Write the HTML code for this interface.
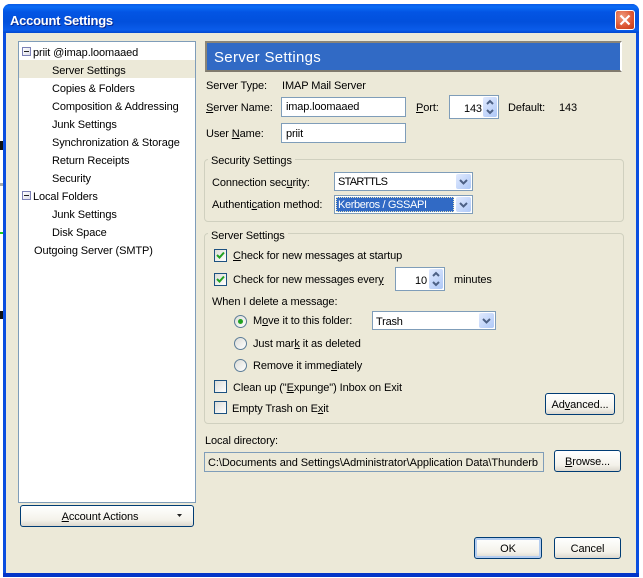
<!DOCTYPE html>
<html><head><meta charset="utf-8">
<style>
html,body{margin:0;padding:0;background:#fff;}
body{width:643px;height:578px;overflow:hidden;position:relative;font-family:"Liberation Sans",sans-serif;font-size:11px;color:#000;}
div,span.a{box-sizing:border-box;}
.abs,.t,.in,.btn,.cb,.rb,.sp,.dd,.grp,.pm{position:absolute;}
.t{white-space:nowrap;line-height:14px;height:14px;letter-spacing:-.1px;margin-top:1px;}
u{text-decoration:underline;}
.in{background:#fff;border:1px solid #7f9db9;line-height:20px;padding-left:5px;white-space:nowrap;overflow:hidden;letter-spacing:-.15px;}
.btn{background:linear-gradient(#fff,#f4f2ea 70%,#dcd8ce);border:1px solid #003c74;border-radius:3px;text-align:center;line-height:19px;letter-spacing:-.1px;padding-top:1px;}
.grp{border:1px solid #d0d0bf;border-radius:4px;}
.lg{position:absolute;background:#ece9d8;padding:0 3px;line-height:14px;left:4px;top:-6px;white-space:nowrap;letter-spacing:-.1px;}
.cb{width:13px;height:13px;border:1px solid #1c5180;background:linear-gradient(135deg,#dcdcd7,#fff);}
.rb{width:13px;height:13px;border:1px solid #5c7d98;border-radius:50%;background:linear-gradient(135deg,#dcdcd7,#fff);}
.arrowbox{position:absolute;background:linear-gradient(135deg,#e1eafe,#aec8f7);border-radius:2px;}
svg{position:absolute;display:block;}
.pm{width:9px;height:9px;border:1px solid #7b80b5;background:linear-gradient(135deg,#fff,#dcdce8);}
.pm:after{content:"";position:absolute;left:1px;top:3px;width:5px;height:1px;background:#222;}
</style></head><body>
<!-- stray desktop bits -->
<div class="abs" style="left:0;top:141px;width:3px;height:9px;background:#111"></div>
<div class="abs" style="left:0;top:183px;width:3px;height:3px;background:#aaa"></div>
<div class="abs" style="left:0;top:232px;width:3px;height:2px;background:#2c2"></div>
<div class="abs" style="left:0;top:311px;width:3px;height:8px;background:#111"></div>

<!-- window -->
<div class="abs" style="left:3px;top:4px;width:636px;height:573px;border-radius:7px 7px 0 0;background:#0a4ee0;overflow:hidden;">
 <div class="abs" style="left:0;top:0;width:636px;height:29px;background:linear-gradient(#0a5be8 0,#0b6cf5 3px,#0355e4 8px,#0250dc 18px,#0a5cea 26px,#0348d0 29px);"></div>
 <div class="abs" style="left:3px;top:29px;width:630px;height:540px;background:#ece9d8;"></div>
 <div class="abs" style="left:0;top:569px;width:636px;height:4px;background:#0335c8"></div>
</div>
<div class="t" style="left:10px;top:13px;color:#fff;font-weight:bold;font-size:13px;letter-spacing:-.25px;text-shadow:1px 1px 0 #0a2a90;">Account Settings</div>
<!-- close -->
<div class="abs" style="left:615px;top:10px;width:20px;height:20px;border:1px solid #fff;border-radius:3px;background:radial-gradient(circle at 35% 30%,#ef9a7c,#dc5430 60%,#c13a16);"></div>
<svg style="left:615px;top:10px" width="20" height="20"><path d="M5.5 5.5L14.5 14.5M14.5 5.5L5.5 14.5" stroke="#fff" stroke-width="2.2" fill="none"/></svg>

<!-- left tree -->
<div class="abs" style="left:18px;top:41px;width:178px;height:462px;background:#fff;border:1px solid #7f9db9;"></div>
<div class="abs" style="left:19px;top:60px;width:176px;height:18px;background:#ece9d8;"></div>
<div class="pm" style="left:22px;top:47px"></div>
<div class="t" style="left:33px;top:45px">priit @imap.loomaaed</div>
<div class="t" style="left:52px;top:63px">Server Settings</div>
<div class="t" style="left:52px;top:81px">Copies &amp; Folders</div>
<div class="t" style="left:52px;top:99px">Composition &amp; Addressing</div>
<div class="t" style="left:52px;top:117px">Junk Settings</div>
<div class="t" style="left:52px;top:135px">Synchronization &amp; Storage</div>
<div class="t" style="left:52px;top:153px">Return Receipts</div>
<div class="t" style="left:52px;top:171px">Security</div>
<div class="pm" style="left:22px;top:191px"></div>
<div class="t" style="left:33px;top:189px">Local Folders</div>
<div class="t" style="left:52px;top:207px">Junk Settings</div>
<div class="t" style="left:52px;top:225px">Disk Space</div>
<div class="t" style="left:34px;top:243px">Outgoing Server (SMTP)</div>

<div class="btn" style="left:20px;top:505px;width:174px;height:22px;line-height:20px;padding-right:14px"><u>A</u>ccount Actions</div>
<svg style="left:177px;top:514px" width="7" height="4"><path d="M0 0H5L2.500 3Z" fill="#222"/></svg>

<!-- header -->
<div class="abs" style="left:205px;top:41px;width:417px;height:31px;background:#316ac5;border:2px solid;border-color:#8a8578 #fff #807a6e #8a8578;"></div>
<div class="t" style="left:214px;top:49px;color:#fff;font-size:15px;line-height:16px;height:16px;letter-spacing:.3px">Server Settings</div>

<div class="t" style="left:206px;top:78px">Server Type:</div>
<div class="t" style="left:282px;top:78px">IMAP Mail Server</div>
<div class="t" style="left:206px;top:100px"><u>S</u>erver Name:</div>
<div class="in" style="left:281px;top:97px;width:125px;height:20px;line-height:18px;padding-left:4px">imap.loomaaed</div>
<div class="t" style="left:416px;top:100px"><u>P</u>ort:</div>
<div class="in" style="left:449px;top:95px;width:50px;height:24px;line-height:24px;padding-left:14px;padding-top:1px">143</div>
<div class="arrowbox" style="left:483px;top:97px;width:14px;height:20px"></div>
<svg style="left:483px;top:97px" width="14" height="20"><path d="M4 7L7 4L10 7M4 13L7 16L10 13" stroke="#4d6185" stroke-width="2" fill="none"/></svg>
<div class="t" style="left:508px;top:100px">Default:</div>
<div class="t" style="left:559px;top:100px">143</div>
<div class="t" style="left:206px;top:126px">User <u>N</u>ame:</div>
<div class="in" style="left:281px;top:123px;width:125px;height:20px;line-height:18px;padding-left:4px;padding-top:1px">priit</div>

<!-- security -->
<div class="grp" style="left:204px;top:159px;width:420px;height:63px"><div class="lg" style="left:3px">Security Settings</div></div>
<div class="t" style="left:212px;top:175px">Connection sec<u>u</u>rity:</div>
<div class="in" style="left:334px;top:172px;width:139px;height:19px;line-height:17px;padding-left:3px;padding-top:1px;letter-spacing:-.75px">STARTTLS</div>
<div class="arrowbox" style="left:456px;top:174px;width:15px;height:15px"></div>
<svg style="left:456px;top:174px" width="15" height="15"><path d="M4 6L7.500 9.500L11 6" stroke="#4d6185" stroke-width="2" fill="none"/></svg>
<div class="t" style="left:212px;top:197px">Authenti<u>c</u>ation method:</div>
<div class="in" style="left:334px;top:195px;width:139px;height:19px;padding:0"></div>
<div class="abs" style="left:336px;top:197px;width:118px;height:15px;background:#316ac5;outline:1px dotted #e8e4b8;outline-offset:-1px;color:#fff;line-height:15px;padding-left:2px;padding-top:1px;letter-spacing:-.36px;white-space:nowrap;overflow:hidden">Kerberos / GSSAPI</div>
<div class="arrowbox" style="left:456px;top:197px;width:15px;height:15px"></div>
<svg style="left:456px;top:197px" width="15" height="15"><path d="M4 6L7.500 9.500L11 6" stroke="#4d6185" stroke-width="2" fill="none"/></svg>

<!-- server settings group -->
<div class="grp" style="left:204px;top:233px;width:420px;height:191px"><div class="lg" style="left:3px;top:-5px">Server Settings</div></div>
<div class="cb" style="left:214px;top:249px"></div>
<svg style="left:214px;top:249px" width="13" height="13"><path d="M3 6L5.500 8.500L10 3.500" stroke="#21a121" stroke-width="2" fill="none"/></svg>
<div class="t" style="left:233px;top:248px"><u>C</u>heck for new messages at startup</div>
<div class="cb" style="left:214px;top:273px"></div>
<svg style="left:214px;top:273px" width="13" height="13"><path d="M3 6L5.500 8.500L10 3.500" stroke="#21a121" stroke-width="2" fill="none"/></svg>
<div class="t" style="left:233px;top:272px">Check for new messages ever<u>y</u></div>
<div class="in" style="left:395px;top:267px;width:50px;height:24px;line-height:24px;padding-left:19px;padding-top:1px">10</div>
<div class="arrowbox" style="left:429px;top:269px;width:14px;height:20px"></div>
<svg style="left:429px;top:269px" width="14" height="20"><path d="M4 7L7 4L10 7M4 13L7 16L10 13" stroke="#4d6185" stroke-width="2" fill="none"/></svg>
<div class="t" style="left:454px;top:272px">minutes</div>
<div class="t" style="left:212px;top:294px">When I delete a message:</div>

<div class="rb" style="left:234px;top:315px"></div>
<div class="abs" style="left:238px;top:319px;width:5px;height:5px;border-radius:50%;background:#21a121"></div>
<div class="t" style="left:253px;top:313px">M<u>o</u>ve it to this folder:</div>
<div class="in" style="left:372px;top:311px;width:124px;height:19px;line-height:19px;padding-left:3px;padding-top:1px;letter-spacing:-.2px">Trash</div>
<div class="arrowbox" style="left:479px;top:313px;width:15px;height:15px"></div>
<svg style="left:479px;top:313px" width="15" height="15"><path d="M4 6L7.500 9.500L11 6" stroke="#4d6185" stroke-width="2" fill="none"/></svg>
<div class="rb" style="left:234px;top:337px"></div>
<div class="t" style="left:253px;top:336px">Just mar<u>k</u> it as deleted</div>
<div class="rb" style="left:234px;top:359px"></div>
<div class="t" style="left:253px;top:358px">Remove it imme<u>d</u>iately</div>

<div class="cb" style="left:214px;top:380px"></div>
<div class="t" style="left:233px;top:380px">Clean up ("<u>E</u>xpunge") Inbox on Exit</div>
<div class="cb" style="left:214px;top:401px"></div>
<div class="t" style="left:232px;top:401px">Empty Trash on E<u>x</u>it</div>
<div class="btn" style="left:545px;top:393px;width:70px;height:22px;line-height:20px">Ad<u>v</u>anced...</div>

<div class="t" style="left:205px;top:433px">Local directory:</div>
<div class="in" style="left:204px;top:452px;width:340px;height:20px;background:#ece9d8;line-height:19px;padding-left:3px;padding-top:1px;letter-spacing:-.08px">C:\Documents and Settings\Administrator\Application Data\Thunderb</div>
<div class="btn" style="left:554px;top:450px;width:67px;height:22px;line-height:20px"><u>B</u>rowse...</div>

<div class="btn" style="left:474px;top:537px;width:68px;height:22px;line-height:20px;box-shadow:inset 0 0 0 2px #b4cdf0">OK</div>
<div class="btn" style="left:554px;top:537px;width:67px;height:22px;line-height:20px">Cancel</div>
</body></html>
